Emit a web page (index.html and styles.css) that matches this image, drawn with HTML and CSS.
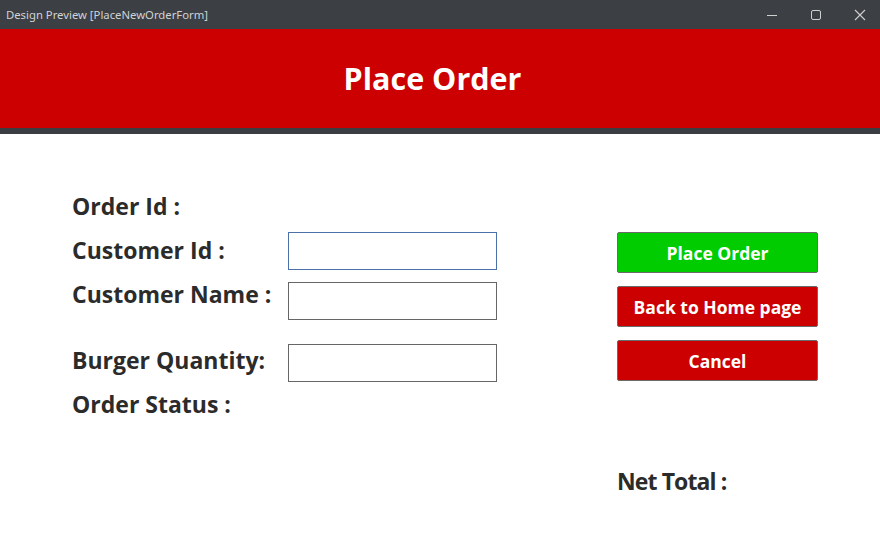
FILE: index.html
```html
<!DOCTYPE html>
<html>
<head>
<meta charset="utf-8">
<link rel="stylesheet" href="styles.css">
</head>
<body>
<div class="window">
  <div class="titlebar">
    <span class="title">Design Preview [PlaceNewOrderForm]</span>
    <div class="controls">
      <svg class="ctl" width="12" height="12" viewBox="0 0 12 12"><path d="M1 6.5h10" stroke="#d0d0d0" stroke-width="1"/></svg>
      <svg class="ctl" width="12" height="12" viewBox="0 0 12 12"><rect x="1.5" y="1.5" width="9" height="9" rx="1.5" fill="none" stroke="#d0d0d0" stroke-width="1"/></svg>
      <svg class="ctl" width="12" height="12" viewBox="0 0 12 12"><path d="M1 1L11 11M11 1L1 11" stroke="#d0d0d0" stroke-width="1.1"/></svg>
    </div>
  </div>
  <header class="banner"><h1>Place Order</h1></header>
  <div class="strip"></div>
  <main class="content">
    <section class="form">
      <div class="row r1"><span class="label">Order Id :</span></div>
      <div class="row r2"><span class="label">Customer Id :</span><input class="field focused" type="text"></div>
      <div class="row r3"><span class="label">Customer Name :</span><input class="field" type="text"></div>
      <div class="row r4"><span class="label">Burger Quantity:</span><input class="field" type="text"></div>
      <div class="row r5"><span class="label">Order Status :</span></div>
    </section>
    <section class="side">
      <button class="btn green">Place Order</button>
      <button class="btn red">Back to Home page</button>
      <button class="btn red">Cancel</button>
      <span class="label total">Net Total :</span>
    </section>
  </main>
</div>
</body>
</html>
```
FILE: styles.css
```css
* { box-sizing: border-box; }
html, body { margin: 0; padding: 0; background: #fff; }
body { font-family: "Open Sans", "Noto Sans", sans-serif; width: 880px; height: 535px; overflow: hidden; }
.window { width: 880px; height: 535px; display: flex; flex-direction: column; }
.titlebar {
  flex-shrink: 0; height: 29px; background: #3c3f43; display: flex; align-items: center; justify-content: space-between;
  padding-left: 6px;
}
.title { color: #cfd2d6; font-size: 11.3px; font-family: "Noto Sans", "Open Sans", sans-serif; }
.controls { display: flex; height: 29px; align-items: center; padding-right: 14px; }
.ctl { margin-left: 32px; }
.controls .ctl:first-child { margin-left: 0; }
.banner {
  flex-shrink: 0; height: 99px; background: #cc0000; display: flex; align-items: center; justify-content: center;
  padding-right: 15px;
}
.banner h1 { margin: 0; color: #fff; font-size: 30.5px; font-weight: 700; line-height: 1; }
.strip { flex-shrink: 0; height: 6px; background: #3a3d41; }
.content { flex: 1; min-height: 0; display: flex; padding: 57px 0 0 72px; }
.form { width: 545px; display: flex; flex-direction: column; }
.row { display: flex; align-items: flex-start; }
.label {
  display: block; width: 216px; font-size: 23px; font-weight: 700; color: #2b2b2b; line-height: 30px; white-space: nowrap;
}
.field {
  width: 209px; height: 38px; border: 1px solid #666; background: #fff; margin: 0; padding: 0 6px; font-size: 14px; outline: none;
}
.field.focused { border-color: #4a72a8; }
.r1 { height: 30px; }
.r2 { margin-top: 11px; }
.r2 .label { margin-top: 3px; }
.r3 { margin-top: 9px; }
.r3 .field { margin-top: 3px; }
.r4 { margin-top: 24px; }
.r4 .label { margin-top: 1px; }
.r5 { margin-top: 7px; }
.side { display: flex; flex-direction: column; padding-top: 41px; }
.btn {
  width: 201px; height: 41px; border: 1px solid #6a6a6a; border-radius: 2px; color: #fff;
  font-family: "Open Sans", "Noto Sans", sans-serif; font-size: 17.5px; font-weight: 700; margin: 0 0 13px 0; padding: 0; cursor: pointer;
}
.green { background: #00cc00; }
.red { background: #cc0000; }
.total { margin-top: 72px; width: auto; letter-spacing: -0.9px; }
```
